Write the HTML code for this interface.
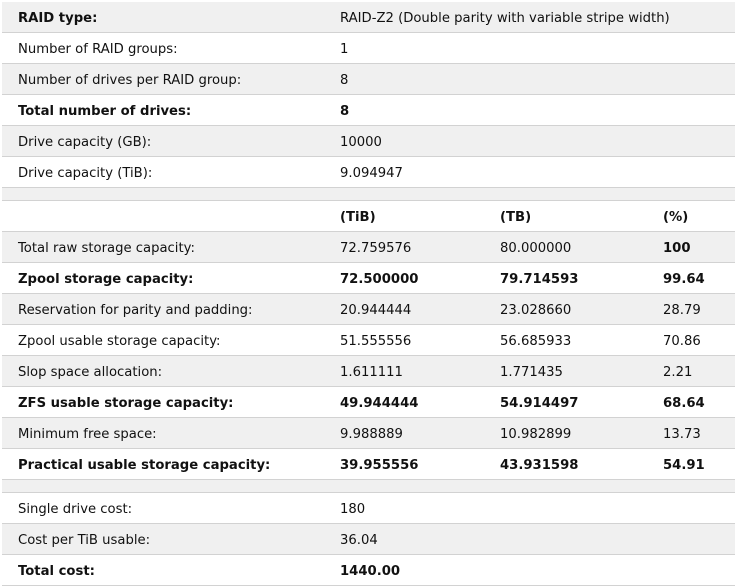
<!DOCTYPE html>
<html><head><meta charset="utf-8"><style>
body{margin:0;background:#fff;width:737px;height:588px;overflow:hidden;font-family:"DejaVu Sans","Liberation Sans",sans-serif;font-size:13.2px;color:#111;}
.t{position:absolute;left:2px;top:2px;width:733px;}
.r{height:30px;border-bottom:1px solid #d2d2d2;position:relative;}
.r:nth-child(odd){background:#f0f0f0;}
.s{height:12px;}
.r span{position:absolute;top:9px;white-space:nowrap;}
.a{left:16px}.b{left:338px}.c{left:498px}.d{left:661px}
.B{font-weight:bold}
</style></head><body><div class="t">
<div class="r B"><span class="a">RAID type:</span><span class="b" style="font-weight:normal">RAID-Z2 (Double parity with variable stripe width)</span></div>
<div class="r"><span class="a">Number of RAID groups:</span><span class="b">1</span></div>
<div class="r"><span class="a">Number of drives per RAID group:</span><span class="b">8</span></div>
<div class="r B"><span class="a">Total number of drives:</span><span class="b">8</span></div>
<div class="r"><span class="a">Drive capacity (GB):</span><span class="b">10000</span></div>
<div class="r"><span class="a">Drive capacity (TiB):</span><span class="b">9.094947</span></div>
<div class="r s"></div>
<div class="r B"><span class="b">(TiB)</span><span class="c">(TB)</span><span class="d">(%)</span></div>
<div class="r"><span class="a">Total raw storage capacity:</span><span class="b">72.759576</span><span class="c">80.000000</span><span class="d B">100</span></div>
<div class="r B"><span class="a">Zpool storage capacity:</span><span class="b">72.500000</span><span class="c">79.714593</span><span class="d">99.64</span></div>
<div class="r"><span class="a">Reservation for parity and padding:</span><span class="b">20.944444</span><span class="c">23.028660</span><span class="d">28.79</span></div>
<div class="r"><span class="a">Zpool usable storage capacity:</span><span class="b">51.555556</span><span class="c">56.685933</span><span class="d">70.86</span></div>
<div class="r"><span class="a">Slop space allocation:</span><span class="b">1.611111</span><span class="c">1.771435</span><span class="d">2.21</span></div>
<div class="r B"><span class="a">ZFS usable storage capacity:</span><span class="b">49.944444</span><span class="c">54.914497</span><span class="d">68.64</span></div>
<div class="r"><span class="a">Minimum free space:</span><span class="b">9.988889</span><span class="c">10.982899</span><span class="d">13.73</span></div>
<div class="r B"><span class="a">Practical usable storage capacity:</span><span class="b">39.955556</span><span class="c">43.931598</span><span class="d">54.91</span></div>
<div class="r s"></div>
<div class="r"><span class="a">Single drive cost:</span><span class="b">180</span></div>
<div class="r"><span class="a">Cost per TiB usable:</span><span class="b">36.04</span></div>
<div class="r B"><span class="a">Total cost:</span><span class="b">1440.00</span></div>
</div></body></html>
